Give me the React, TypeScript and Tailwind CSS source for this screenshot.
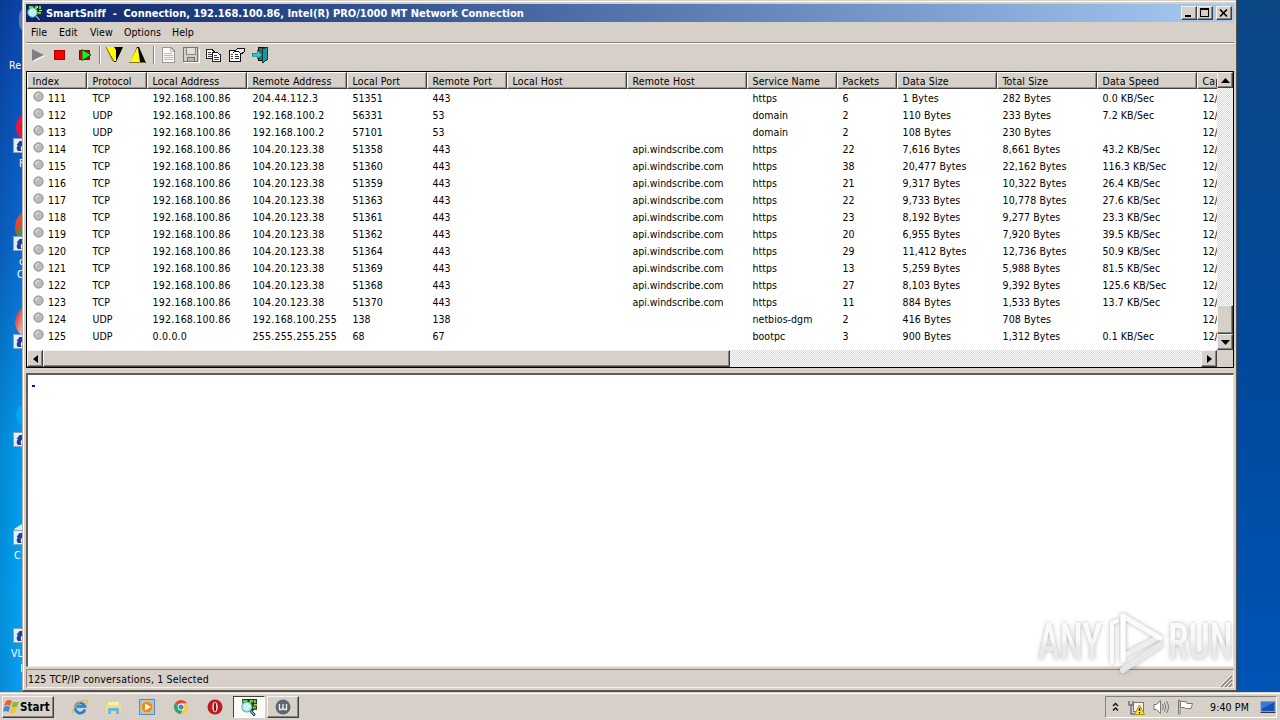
import React from 'react';
import clsx from 'clsx';

type Column = { label: string; cell: string; text?: string };

const COLUMNS: Column[] = [
  { label: 'Index', cell: 'w-[60px]' },
  { label: 'Protocol', cell: 'w-[60px]' },
  { label: 'Local Address', cell: 'w-[100px]', text: 'tracking-[0.22px]' },
  { label: 'Remote Address', cell: 'w-[100px]', text: 'tracking-[0.22px]' },
  { label: 'Local Port', cell: 'w-[80px]' },
  { label: 'Remote Port', cell: 'w-[80px]' },
  { label: 'Local Host', cell: 'w-[120px]' },
  { label: 'Remote Host', cell: 'w-[120px]', text: 'tracking-[-0.02px]' },
  { label: 'Service Name', cell: 'w-[90px]' },
  { label: 'Packets', cell: 'w-[60px]' },
  { label: 'Data Size', cell: 'w-[100px]', text: 'tracking-[0.12px]' },
  { label: 'Total Size', cell: 'w-[100px]', text: 'tracking-[0.12px]' },
  { label: 'Data Speed', cell: 'w-[100px]', text: 'tracking-[0.08px]' },
  { label: 'Cap', cell: 'w-[100px]' },
];

const LOCAL = '192.168.100.86';
const WS = '104.20.123.38';
const API = 'api.windscribe.com';

const ROWS: string[][] = [
  ['111', 'TCP', LOCAL, '204.44.112.3', '51351', '443', '', '', 'https', '6', '1 Bytes', '282 Bytes', '0.0 KB/Sec'],
  ['112', 'UDP', LOCAL, '192.168.100.2', '56331', '53', '', '', 'domain', '2', '110 Bytes', '233 Bytes', '7.2 KB/Sec'],
  ['113', 'UDP', LOCAL, '192.168.100.2', '57101', '53', '', '', 'domain', '2', '108 Bytes', '230 Bytes', ''],
  ['114', 'TCP', LOCAL, WS, '51358', '443', '', API, 'https', '22', '7,616 Bytes', '8,661 Bytes', '43.2 KB/Sec'],
  ['115', 'TCP', LOCAL, WS, '51360', '443', '', API, 'https', '38', '20,477 Bytes', '22,162 Bytes', '116.3 KB/Sec'],
  ['116', 'TCP', LOCAL, WS, '51359', '443', '', API, 'https', '21', '9,317 Bytes', '10,322 Bytes', '26.4 KB/Sec'],
  ['117', 'TCP', LOCAL, WS, '51363', '443', '', API, 'https', '22', '9,733 Bytes', '10,778 Bytes', '27.6 KB/Sec'],
  ['118', 'TCP', LOCAL, WS, '51361', '443', '', API, 'https', '23', '8,192 Bytes', '9,277 Bytes', '23.3 KB/Sec'],
  ['119', 'TCP', LOCAL, WS, '51362', '443', '', API, 'https', '20', '6,955 Bytes', '7,920 Bytes', '39.5 KB/Sec'],
  ['120', 'TCP', LOCAL, WS, '51364', '443', '', API, 'https', '29', '11,412 Bytes', '12,736 Bytes', '50.9 KB/Sec'],
  ['121', 'TCP', LOCAL, WS, '51369', '443', '', API, 'https', '13', '5,259 Bytes', '5,988 Bytes', '81.5 KB/Sec'],
  ['122', 'TCP', LOCAL, WS, '51368', '443', '', API, 'https', '27', '8,103 Bytes', '9,392 Bytes', '125.6 KB/Sec'],
  ['123', 'TCP', LOCAL, WS, '51370', '443', '', API, 'https', '11', '884 Bytes', '1,533 Bytes', '13.7 KB/Sec'],
  ['124', 'UDP', LOCAL, '192.168.100.255', '138', '138', '', '', 'netbios-dgm', '2', '416 Bytes', '708 Bytes', ''],
  ['125', 'UDP', '0.0.0.0', '255.255.255.255', '68', '67', '', '', 'bootpc', '3', '900 Bytes', '1,312 Bytes', '0.1 KB/Sec'],
];

const RAISED =
  'bg-[#d6d0c8] border border-t-[#f4f2ee] border-l-[#f4f2ee] border-b-[#404040] border-r-[#404040] shadow-[inset_-1px_-1px_0_#86827c]';
const TRACK = 'bg-[repeating-conic-gradient(#ffffff_0_25%,#d9d4cc_0_50%)] bg-[length:2px_2px]';

function Label({ children, className }: { children: React.ReactNode; className?: string }) {
  return <span className={clsx('block whitespace-pre leading-[14px]', className)}>{children}</span>;
}

function AppIcon({ size = 16 }: { size?: number }) {
  return (
    <svg width={size} height={size} viewBox="0 0 16 16" className="shrink-0">
      <path d="M1 0H15V10H12V11H2Z" fill="#0d3b12" />
      <path d="M2 1H6V3H2ZM8 1H10V4H8ZM12 1H14V4H12ZM11 7H14V9H11Z" fill="#7ac943" />
      <path d="M10 1H11V3H10ZM12 5H15V6H12Z" fill="#e8e87a" />
      <circle cx="5.500" cy="7.500" r="4.700" fill="#b6f0f4" stroke="#5fb3ba" />
      <path d="M3.500 7L6 4.500M4.500 9.500L8 6" stroke="#fff" />
      <path d="M9 11L13 15.500" stroke="#07121c" strokeWidth="2.400" />
      <path d="M9 11L12.600 15" stroke="#8fc6e8" strokeWidth="1.200" />
    </svg>
  );
}

function ShortcutArrow({ className }: { className: string }) {
  return (
    <svg width="11" height="15" viewBox="0 0 11 15" className={clsx('absolute left-[13px]', className)}>
      <rect x="0.500" y="0.500" width="14" height="14" fill="#e6eef7" stroke="#8aa0bd" />
      <path d="M3.500 7L6.500 3H12V8L10 7C8 8 7 10 8.500 13H5C3 11 3.500 9 5 7Z" fill="#1d3f98" />
    </svg>
  );
}

function Desktop() {
  return (
    <div className="absolute top-0 left-0 h-[692px] w-6 overflow-hidden bg-[linear-gradient(90deg,#0002_0,#0000_100%),linear-gradient(180deg,#0a44ac_0,#0b54c0_14%,#0a6ad2_35%,#0787e4_52%,#039cf2_64%,#02a4f8_85%,#0a9ff6_100%)] text-white">
      <div className="absolute top-2 left-[19px] h-6 w-2 rounded-l-full bg-[#8fa3bf]/60" />
      <Label className="absolute top-[58px] left-[9px]">Re</Label>
      <div className="absolute top-[111px] left-4 h-8 w-6 rounded-l-full bg-[#e8163e]" />
      <ShortcutArrow className="top-[138px]" />
      <Label className="absolute top-[156px] left-[19px]">F</Label>
      <div className="absolute top-[209px] left-[15px] h-9 w-8 rounded-l-full bg-[linear-gradient(125deg,#d94b32_32%,#2f9c50_34%)]" />
      <ShortcutArrow className="top-[236px]" />
      <Label className="absolute top-[254px] left-[19px]">c</Label>
      <Label className="absolute top-[267px] left-[17px]">C</Label>
      <div className="absolute top-[306px] left-[15px] h-8 w-8 rounded-l-full bg-[linear-gradient(110deg,#c2161c,#f3aca0_35%,#b01018)]" />
      <ShortcutArrow className="top-[334px]" />
      <div className="absolute top-[403px] left-4 h-6 w-6 rounded-full bg-[#0aaef2]/70" />
      <ShortcutArrow className="top-[432px]" />
      <svg width="8" height="8" className="absolute top-[523px] left-[14px]">
        <path d="M0 6L8 1V8H3Z" fill="#dceefa" />
      </svg>
      <ShortcutArrow className="top-[530px]" />
      <Label className="absolute top-[548px] left-[14px]">C</Label>
      <ShortcutArrow className="top-[628px]" />
      <Label className="absolute top-[646px] left-[11px]">VL</Label>
      <div className="absolute top-[664px] left-[21px] h-2 w-px bg-white/80" />
    </div>
  );
}

function CaptionButton({ children }: { children: React.ReactNode }) {
  return (
    <div className={clsx('flex h-[14px] w-4 items-center justify-center', RAISED)}>
      <svg width="12" height="10" viewBox="0 0 12 10" fill="none" stroke="#000" shapeRendering="crispEdges">
        {children}
      </svg>
    </div>
  );
}

function TitleBar() {
  return (
    <div className="flex h-[18px] items-center bg-linear-to-r from-[#0c246a] to-[#a8cbf2] pr-[2px] pl-px">
      <AppIcon size={16} />
      <Label className="mt-px ml-[3px] text-[11px] font-bold tracking-[-0.012px] text-white">
        {'SmartSniff  -  Connection, 192.168.100.86, Intel(R) PRO/1000 MT Network Connection'}
      </Label>
      <div className="ml-auto flex">
        <CaptionButton>
          <path d="M2 8H8" strokeWidth="2" />
        </CaptionButton>
        <CaptionButton>
          <path d="M1 1H10" strokeWidth="2" />
          <path d="M1.500 1V8.500H9.500V1" />
        </CaptionButton>
        <div className="ml-[3px]">
          <CaptionButton>
            <path d="M2 1.500L9 8.500M9 1.500L2 8.500" strokeWidth="1.700" shapeRendering="auto" />
          </CaptionButton>
        </div>
      </div>
    </div>
  );
}

function MenuBar() {
  return (
    <div className="flex h-[21px] border-b border-[#86827c] pt-[3px] pl-[5px] tracking-[0.08px]">
      <Label className="w-[28px]">File</Label>
      <Label className="w-[31px]">Edit</Label>
      <Label className="w-[34px]">View</Label>
      <Label className="w-[48px]">Options</Label>
      <Label>Help</Label>
    </div>
  );
}

function Separator({ className }: { className?: string }) {
  return <div className={clsx('h-[18px] w-[2px] shrink-0 border-r border-l border-r-white border-l-[#86827c]', className)} />;
}

function Toolbar() {
  return (
    <div className="flex h-7 items-center border-t border-white pb-[5px] pl-[4px]">
      <svg width="68" height="18" viewBox="0 0 68 18" className="mr-px">
        <path d="M3 4L15 10L3 16Z" fill="#fff" />
        <path d="M2 3L14 9L2 15Z" fill="#808080" />
        <rect x="24.500" y="4.500" width="10" height="9" fill="#fb0000" stroke="#a80000" />
        <path d="M49.500 4.500H59.500V13.500H49.500Z" fill="#e00000" stroke="#7d0000" />
        <path d="M52 3.500L61 9L52 14.500Z" fill="#08f72c" stroke="#07641a" />
      </svg>
      <Separator />
      <svg width="51" height="18" viewBox="0 0 51 18">
        <path d="M5 1H22L15 16H13Z" fill="#000" />
        <path d="M5 1H13L15 4V15H13Z" fill="#ffff00" />
        <path d="M5 1L12 15" stroke="#77741b" />
        <path d="M36 1H38L45 17H29Z" fill="#000" />
        <path d="M36 2H37L39 16H29Z" fill="#ffff00" />
        <path d="M28 16.500H44" stroke="#77741b" />
      </svg>
      <Separator className="ml-px" />
      <svg width="115" height="18" viewBox="0 0 115 18" fill="none" shapeRendering="crispEdges">
        {/* new document */}
        <g transform="translate(-1 0)">
          <path d="M8.500 1.500H17L20.500 5V16.500H8.500Z" fill="#fafafa" stroke="#9b9893" />
          <path d="M16.500 2V5.500H20M10 7.500H18M10 9.500H19M10 11.500H19M10 13.500H19" stroke="#bbb8b2" />
        </g>
        {/* save */}
        <g transform="translate(-2 0)">
          <path d="M30.500 1.500H44.500V15.500H30.500Z" fill="#d3cec6" stroke="#77736f" />
          <path d="M33.500 2V8.500H42.500V2" fill="#e4e0da" stroke="#8a8680" />
          <path d="M34.500 15V11.500H41.500V15" fill="#b8b4ae" stroke="#77736f" />
          <path d="M31 16.500H46V3" stroke="#fff" />
        </g>
        {/* copy */}
        <g transform="translate(-2 0)">
          <path d="M53.500 3.500H59L61.500 6V12.500H53.500Z" fill="#fff" stroke="#222" />
          <path d="M55 6.500H58M55 8.500H60M55 10.500H59" stroke="#444" />
          <path d="M59.500 6.500H64.500L67.500 9V15.500H59.500Z" fill="#fff" stroke="#222" />
          <path d="M61 9.500H64M61 11.500H66M61 13.500H66" stroke="#444" />
        </g>
        {/* properties */}
        <g transform="translate(-2 0)">
          <path d="M76.500 4.500H87.500V15.500H76.500Z" fill="#fff" stroke="#111" />
          <path d="M78 8.500H80M82 8.500H85M78 10.500H80M82 10.500H86M78 12.500H80M82 12.500H86" stroke="#333" />
          <path d="M81 6L85 2H91V6L88 8L85 5Z" fill="#e9e6e0" stroke="#111" />
          <path d="M84 4H88" stroke="#fff" />
        </g>
        {/* exit */}
        <g transform="translate(-2 0)">
          <path d="M105.500 1.500H113.500V14.500H105.500Z" fill="#5a5a5a" stroke="#111" />
          <path d="M109 3L114 1.500V14L109 17Z" fill="#149aa0" stroke="#083c40" />
          <path d="M99 7H104V4L109 9L104 13V10H99Z" fill="#12d2d6" stroke="#0a6d78" strokeWidth="0.600" />
        </g>
      </svg>
    </div>
  );
}

function Bullet() {
  return (
    <svg width="11" height="12" viewBox="0 0 11 12" className="mr-[4px] shrink-0">
      <circle cx="5.500" cy="5.500" r="4.600" fill="#bcbcbc" stroke="#858585" />
      <path d="M2.800 5.500A2.800 2.800 0 0 1 6 2.700" stroke="#ededed" fill="none" />
    </svg>
  );
}

function ListView() {
  return (
    <div className="flex h-[297px] flex-col border border-black bg-white">
      <div className="flex h-[278px]">
        <div className="w-[1190px] overflow-hidden">
          <div className="flex h-[17px] w-[1270px] bg-[#d6d0c8]">
            {COLUMNS.map((c) => (
              <div
                key={c.label}
                className={clsx(
                  'h-[17px] shrink-0 border border-t-white border-r-[#404040] border-b-[#404040] border-l-white pt-px pl-[4.500px] shadow-[inset_-1px_-1px_0_#99958e]',
                  c.cell,
                )}
              >
                <Label className="tracking-[0.14px]">{c.label}</Label>
              </div>
            ))}
          </div>
          {ROWS.map((row) => (
            <div key={row[0]} className="flex h-[17px] w-[1270px]">
              {COLUMNS.map((c, i) => (
                <div key={c.label} className={clsx('flex shrink-0 pt-[2px]', i === 0 ? 'pl-[6px]' : 'pl-[5.500px]', c.cell)}>
                  {i === 0 && <Bullet />}
                  <Label className={c.text}>{row[i] ?? '12/'}</Label>
                </div>
              ))}
            </div>
          ))}
        </div>
        <div className={clsx('flex w-4 flex-col', TRACK)}>
          <div className={clsx('flex h-4 items-center justify-center', RAISED)}>
            <svg width="9" height="5">
              <path d="M0 5L4.500 0L9 5Z" />
            </svg>
          </div>
          <div className={clsx('mt-[217px] h-[29px]', RAISED)} />
          <div className={clsx('flex h-4 items-center justify-center', RAISED)}>
            <svg width="9" height="5">
              <path d="M0 0H9L4.500 5Z" />
            </svg>
          </div>
        </div>
      </div>
      <div className="flex h-[17px] bg-[#d6d0c8]">
        <div className={clsx('flex w-[1190px]', TRACK)}>
          <div className={clsx('flex w-4 items-center justify-center', RAISED)}>
            <svg width="5" height="8">
              <path d="M5 0V8L0 4Z" />
            </svg>
          </div>
          <div className={clsx('w-[687px]', RAISED)} />
          <div className={clsx('ml-auto flex w-4 items-center justify-center', RAISED)}>
            <svg width="5" height="8">
              <path d="M0 0V8L5 4Z" />
            </svg>
          </div>
        </div>
      </div>
    </div>
  );
}

function Watermark() {
  return (
    <svg
      width="212"
      height="76"
      viewBox="0 0 212 76"
      className="absolute top-[602px] left-[1026px] drop-shadow-[0_0_2px_rgba(0,0,0,0.32)]"
      fill="none"
    >
      <defs>
        <linearGradient id="fade" x1="0" y1="0" x2="0" y2="1">
          <stop offset="0.45" stopColor="#fff" />
          <stop offset="0.6" stopColor="#ececec" />
        </linearGradient>
      </defs>
      <g fill="url(#fade)" fillOpacity="0.9" fontFamily="Roboto, sans-serif" fontSize="50" fontWeight="500">
        <text x="12" y="57" textLength="64" lengthAdjust="spacingAndGlyphs">ANY</text>
        <text x="142" y="57" textLength="65" lengthAdjust="spacingAndGlyphs">RUN</text>
      </g>
      <g stroke="#fff" strokeOpacity="0.9" strokeWidth="5" strokeLinejoin="round" strokeLinecap="round">
        <path d="M97 68L134 43" stroke="#ececec" strokeWidth="6" />
        <path d="M97 14V54L131 36" stroke="#f2f2f2" />
        <path d="M97 58V14L134 36" />
        <path d="M91 19L86 21V60" strokeWidth="4" />
      </g>
    </svg>
  );
}

function AppWindow() {
  return (
    <div className="absolute top-0 left-[22px] flex h-[692px] w-[1215px] flex-col border-r border-b-2 border-l border-r-[#55524e] border-b-[#55524e] border-l-[#b9b5ac] bg-[#d6d0c8]">
      <div className="mt-px flex grow flex-col border-t border-l border-t-white border-l-white pt-[2px] pr-[2px] pl-[2px]">
        <TitleBar />
        <MenuBar />
        <Toolbar />
        <ListView />
        <div className="mt-[5px] h-[294px] border-t-2 border-r border-b border-l-2 border-t-[#605d58] border-r-[#e8e5e0] border-b-[#e8e5e0] border-l-[#605d58] bg-white pt-[9px] pl-[4px]">
          <div className="mt-px h-[2px] w-[3px] bg-[#1a08a8]" />
        </div>
        <div className="mt-[2px] flex h-[19px] items-center border border-t-[#86827c] border-r-[#f2f0ec] border-b-[#f2f0ec] border-l-[#86827c] pl-px">
          <Label className="tracking-[0.16px]">125 TCP/IP conversations, 1 Selected</Label>
          <svg width="14" height="14" className="mt-[4px] ml-auto" stroke="#86827c">
            <path d="M2 13L13 2M6 13L13 6M10 13L13 10" strokeWidth="1.500" />
            <path d="M1 12L12 1M5 12L12 5M9 12L12 9" stroke="#fff" strokeWidth="0.800" />
          </svg>
        </div>
      </div>
    </div>
  );
}

function QuickLaunch() {
  return (
    <div className="ml-[18px] flex items-center">
      <svg width="16" height="16" viewBox="0 0 16 16" className="mr-[17px]" fill="none">
        <path d="M13 10.500A5 5 0 1 1 13 7.500H5" stroke="#1c84d8" strokeWidth="2.700" />
        <path d="M1.500 14.500C-1 10 9-1 15 1.500C16 3 14 5 13 6" stroke="#e5b72e" strokeWidth="1.300" />
      </svg>
      <svg width="17" height="16" viewBox="0 0 17 16" className="mr-[17px]">
        <path d="M1 2H7L8 4H15V12H1Z" fill="#e8cf72" />
        <path d="M3 3H14V8H3Z" fill="#f8edb4" />
        <path d="M1 6H16V14H1Z" fill="#f2dc86" />
        <path d="M3 15V10Q3 9 4 9H13Q14 9 14 10V15H11V12H6V15Z" fill="#65b8e3" />
      </svg>
      <svg width="17" height="16" viewBox="0 0 17 16" className="mr-[17px]">
        <rect x="0.500" y="0.500" width="15" height="15" fill="#9cc7e9" stroke="#4f8fc4" />
        <circle cx="8" cy="8" r="6" fill="#f08a16" stroke="#f9c67a" />
        <path d="M6 4.500L12 8L6 11.500Z" fill="#fff" />
      </svg>
      <svg width="16" height="16" viewBox="0 0 16 16" className="mr-[18px]">
        <path d="M8 8L1.900 4.500A7 7 0 0 1 14.100 4.500L8 4.500Z" fill="#df4a38" />
        <path d="M8 8L1.900 4.500A7 7 0 0 0 8 15L10 9Z" fill="#35a357" />
        <path d="M8 4.500H14.100A7 7 0 0 1 8 15L11 9Z" fill="#f8cd3a" />
        <circle cx="8" cy="8" r="3.400" fill="#fff" />
        <circle cx="8" cy="8" r="2.600" fill="#4a83e2" />
      </svg>
      <svg width="16" height="16" viewBox="0 0 16 16">
        <circle cx="8" cy="8" r="7.500" fill="#c01820" />
        <ellipse cx="8" cy="8" rx="2.700" ry="5.300" fill="#f6e8e8" />
        <ellipse cx="8" cy="8" rx="1.200" ry="4.500" fill="#8e1016" />
      </svg>
    </div>
  );
}

function Taskbar() {
  return (
    <div className="absolute top-[692px] left-0 flex h-[28px] w-full items-center bg-[#d6d0c8] pt-[2px] shadow-[inset_0_1px_0_#d6d0c8,inset_0_2px_0_#fff]">
      <div className={clsx('ml-[2px] flex h-[22px] w-[52px] items-center', RAISED)}>
        <svg width="17" height="16" viewBox="0 0 17 16">
          <path d="M3 2Q6 0 9 2L7 7Q4 5 1 7Z" fill="#ec5f2c" />
          <path d="M10 2.500Q13 4 16 2.500L14 8Q11 9 8.500 7.500Z" fill="#83bd3a" />
          <path d="M1 8Q4 6 7 8L5.500 13Q2 11 0 13Z" fill="#3f86d6" />
          <path d="M8 8.500Q11 10 14 9L12 14Q9 15.500 6.500 14Z" fill="#f6c436" />
        </svg>
        <Label className="text-[11.500px] font-bold">Start</Label>
      </div>
      <QuickLaunch />
      <div className="ml-[10px] flex h-[22px] w-[32px] items-center justify-center border border-t-[#404040] border-r-white border-b-white border-l-[#404040] bg-[#fbfaf8]">
        <AppIcon size={17} />
      </div>
      <div className={clsx('ml-[2px] flex h-[22px] w-[32px] items-center justify-center', RAISED)}>
        <svg width="16" height="16" viewBox="0 0 16 16" fill="none">
          <circle cx="8" cy="8" r="7.500" fill="#5d6671" />
          <path d="M4.500 5V10.500H7L8 8.500L9 10.500H11.500V5M8 5V9" stroke="#f0f0f0" strokeWidth="1.300" />
        </svg>
      </div>
      <div className="mr-[3px] ml-auto flex h-[22px] w-[172px] items-center border border-t-[#86827c] border-r-white border-b-white border-l-[#86827c] pl-[6px]">
        <svg width="7" height="10" viewBox="0 0 7 10" fill="none" stroke="#111" strokeWidth="1.400">
          <path d="M1 4L3.500 1.500L6 4M1 8.500L3.500 6L6 8.500" />
        </svg>
        <svg width="18" height="17" viewBox="0 0 18 17" className="ml-[9px]" fill="none">
          <path d="M1 2V6H5V2M3 6V15H7" stroke="#6d6d6d" strokeWidth="1.400" />
          <rect x="5.500" y="3.500" width="10" height="9" fill="#f4f4f2" stroke="#777" />
          <path d="M11.500 6L16.500 15.500H6.500Z" fill="#ffe03a" stroke="#b09210" />
          <path d="M11.500 9V12M11.500 13V14.500" stroke="#222" strokeWidth="1.300" />
        </svg>
        <svg width="17" height="16" viewBox="0 0 17 16" className="ml-[7px]" fill="none" stroke="#777">
          <path d="M1 5.500H3.500L7.500 1.500V14.500L3.500 10.500H1Z" fill="#fff" />
          <path d="M9.500 5Q11 8 9.500 11M11.500 3.500Q14 8 11.500 12.500M13.500 2Q17.500 8 13.500 14" />
        </svg>
        <svg width="17" height="16" viewBox="0 0 17 16" className="ml-[7px]" stroke="#777" fill="#fff">
          <path d="M1.500 1V15H3V1Z" />
          <path d="M3.500 2.500H9L10 4.500H15.500L14 9.500H8.500L7.500 8.500H3.500Z" />
        </svg>
        <Label className="ml-[16px] tracking-[0.12px]">9:40 PM</Label>
        <svg width="16" height="14" viewBox="0 0 15 14" className="ml-[11px]">
          <rect x="0.500" y="1.500" width="14" height="10" fill="#1752b5" stroke="#7c9fcb" />
          <path d="M1 2H14L1 9Z" fill="#397bd2" />
          <path d="M0 12.500H15" stroke="#2e3440" />
        </svg>
      </div>
    </div>
  );
}

export default function App() {
  return (
    <div className="relative h-[720px] w-[1280px] overflow-hidden bg-[#02489c] font-['DejaVu_Sans_Condensed','DejaVu_Sans',sans-serif] text-[10.500px] font-stretch-condensed tracking-[0.04px] text-black">
      <div className="absolute top-0 right-0 h-[692px] w-[43px] bg-linear-to-b from-[#0c4785] via-[#00489a] to-[#0054b5]" />
      <Desktop />
      <AppWindow />
      <Taskbar />
      <Watermark />
    </div>
  );
}
